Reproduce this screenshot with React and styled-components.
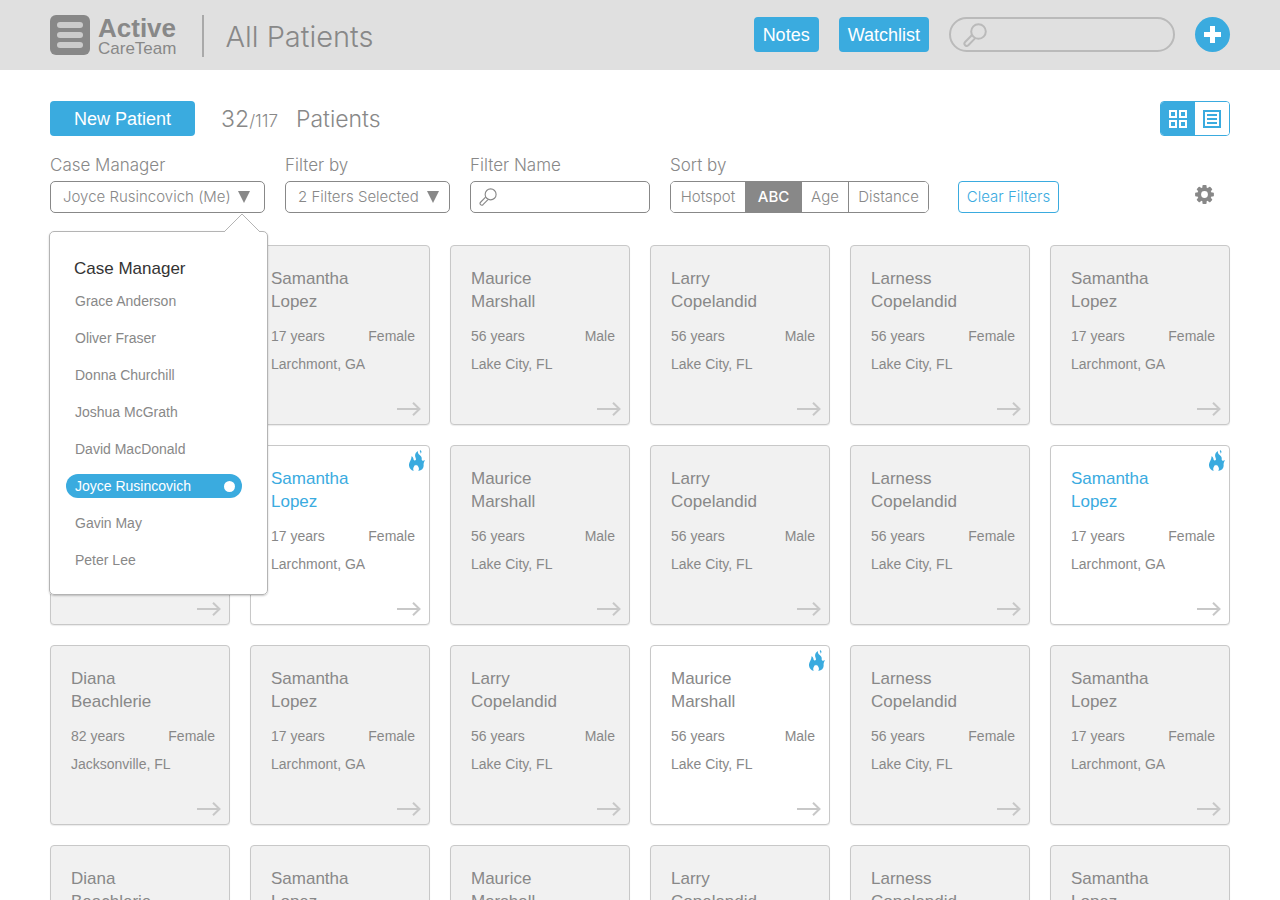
import React, { useState } from 'react';
import styled, { createGlobalStyle, css } from 'styled-components';

const blue = '#3aabdf';
const grey = '#888888';

const light = css`
  font-family: Inter, "Liberation Sans", sans-serif;
  font-weight: 300;
`;

const GlobalStyle = createGlobalStyle`
  *, *::before, *::after { box-sizing: border-box; }
  body {
    margin: 0;
    background: #fff;
    color: ${grey};
    font-family: "Liberation Sans", Arial, sans-serif;
    font-size: 15px;
  }
  button, input, select { font: inherit; color: inherit; }
  button { cursor: pointer; }
`;

const Header = styled.header`
  display: flex;
  align-items: center;
  height: 70px;
  padding: 0 50px;
  background: #e0e0e0;
`;

const MenuButton = styled.button`
  display: flex;
  flex-direction: column;
  align-items: center;
  justify-content: center;
  gap: 4px;
  width: 40px;
  height: 40px;
  padding: 0;
  border: 0;
  border-radius: 6px;
  background: ${grey};
`;

const MenuBar = styled.span`
  width: 26px;
  height: 6px;
  border-radius: 3px;
  background: #cbcbcb;
`;

const Brand = styled.a`
  display: flex;
  flex-direction: column;
  margin: 4px 0 2px 8px;
  padding-right: 26px;
  border-right: 2px solid #a9a9a9;
  color: ${grey};
  text-decoration: none;
  font-size: 17px;
  line-height: 16px;
`;

const BrandStrong = styled.strong`
  font-size: 26px;
  line-height: 26px;
`;

const PageTitle = styled.h1`
  ${light}
  margin: 0 auto 0 21px;
  padding-top: 3px;
  font-size: 29px;
  line-height: 40px;
`;

const HeaderActions = styled.div`
  display: flex;
  align-items: center;
  gap: 20px;
  padding-bottom: 1px;
`;

const PrimaryButton = styled.button`
  height: 35px;
  padding: 0 ${(p) => (p.$wide ? 24 : 9)}px;
  border: 0;
  border-radius: 4px;
  background: ${blue};
  color: #fff;
  font-size: 18px;
  line-height: 34px;
`;

const GlobalSearch = styled.label`
  display: flex;
  align-items: center;
  gap: 8px;
  width: 226px;
  height: 35px;
  padding: 0 14px 0 12px;
  border: 2px solid #bababa;
  border-radius: 18px;
  color: #bababa;
`;

const BareInput = styled.input`
  flex: 1;
  min-width: 0;
  padding: 0;
  border: 0;
  outline: 0;
  background: none;
  color: ${grey};
`;

const AddButton = styled.button`
  display: grid;
  place-items: center;
  width: 35px;
  height: 35px;
  padding: 0;
  border: 0;
  border-radius: 50%;
  background: ${blue};
`;

const Main = styled.main`
  padding: 31px 50px;
`;

const SummaryRow = styled.div`
  display: flex;
  align-items: center;
  height: 35px;
`;

const Count = styled.h2`
  ${light}
  margin: 0 auto 0 26px;
  font-size: 23px;
  white-space: pre;
`;

const Total = styled.span`
  margin-right: 18px;
  font-size: 17px;
`;

const ViewToggle = styled.div`
  display: flex;
  height: 35px;
  border: 1px solid ${blue};
  border-radius: 4px;
  overflow: hidden;
`;

const ViewButton = styled.button`
  display: grid;
  place-items: center;
  width: 34px;
  padding: 0;
  border: 0;
  background: ${(p) => (p.$active ? blue : '#fff')};
  color: ${(p) => (p.$active ? '#fff' : blue)};
`;

const FilterRow = styled.div`
  ${light}
  display: flex;
  align-items: flex-end;
  gap: 20px;
  margin-top: 18px;
`;

const Field = styled.div`
  position: relative;
  width: ${(p) => (p.$width ? p.$width + 'px' : 'auto')};
`;

const fieldLabel = css`
  display: block;
  height: 27px;
  font-size: 17px;
  line-height: 22px;
`;

const FieldLabel = styled.label`${fieldLabel}`;
const GroupLabel = styled.div`${fieldLabel}`;

const SelectShell = styled.div`
  display: grid;
  align-items: center;
`;

const Select = styled.select`
  grid-area: 1 / 1;
  width: 100%;
  height: 32px;
  padding: 0 30px 1px 12px;
  border: 1px solid ${grey};
  border-radius: 5px;
  background: #fff;
  appearance: none;
`;

const Caret = styled.svg`
  grid-area: 1 / 1;
  justify-self: end;
  margin-right: ${(p) => p.$inset}px;
  pointer-events: none;
`;

const NameBox = styled.div`
  display: flex;
  align-items: center;
  gap: 8px;
  height: 32px;
  padding: 0 8px;
  border: 1px solid ${grey};
  border-radius: 5px;
`;

const Segments = styled.div`
  display: flex;
  height: 32px;
  border: 1px solid ${grey};
  border-radius: 5px;
  overflow: hidden;
`;

const Segment = styled.button`
  width: ${(p) => p.$width}px;
  padding: 0 0 1px;
  border: 0;
  background: ${(p) => (p.$active ? grey : '#fff')};
  color: ${(p) => (p.$active ? '#fff' : grey)};
  font-weight: ${(p) => (p.$active ? 500 : 300)};

  & + & { border-left: 1px solid ${grey}; }
`;

const ClearButton = styled.button`
  height: 32px;
  width: 101px;
  margin-left: 9px;
  padding: 0 0 1px;
  border: 1px solid ${blue};
  border-radius: 4px;
  background: #fff;
  color: ${blue};
`;

const GearButton = styled.button`
  display: grid;
  place-items: center;
  height: 38px;
  margin-left: auto;
  padding: 0 16px;
  border: 0;
  background: none;
`;

const Popover = styled.fieldset`
  position: absolute;
  z-index: 2;
  top: 77px;
  left: -1px;
  width: 219px;
  margin: 0;
  padding: 27px 16px 22px;
  border: 1px solid #b4b4b4;
  border-radius: 5px;
  background: #fff;
  box-shadow: 0 1px 2px rgba(0, 0, 0, 0.22);
  font-family: "Liberation Sans", Arial, sans-serif;
  font-weight: 400;
`;

const PopoverTip = styled.svg`
  position: absolute;
  top: -19px;
  right: 7px;
`;

const PopoverTitle = styled.legend`
  float: left;
  width: 100%;
  padding: 0 8px;
  margin-bottom: 10px;
  color: #333;
  font-size: 17px;
  line-height: 20px;
`;

const OptionList = styled.div`
  clear: both;
  display: flex;
  flex-direction: column;
  gap: 13px;
`;

const Option = styled.label`
  display: flex;
  align-items: center;
  justify-content: space-between;
  width: 176px;
  height: 24px;
  padding: 0 7px 0 9px;
  border-radius: 12px;
  font-size: 14px;
  background: ${(p) => (p.$active ? blue : 'transparent')};
  color: ${(p) => (p.$active ? '#fff' : grey)};
  cursor: pointer;
`;

const OptionRadio = styled.input`
  width: 11px;
  height: 11px;
  margin: 0;
  border-radius: 50%;
  appearance: none;

  &:checked { background: #fff; }
`;

const Cards = styled.div`
  display: grid;
  grid-template-columns: repeat(6, minmax(0, 1fr));
  gap: 20px;
  margin-top: 32px;
`;

const Card = styled.article`
  position: relative;
  display: flex;
  flex-direction: column;
  height: 180px;
  padding: 21px 14px 8px 20px;
  border: 1px solid #c8c8c8;
  border-radius: 4px;
  background: ${(p) => (p.$hot ? '#fff' : '#f1f1f1')};
  box-shadow: 0 1px 1px rgba(0, 0, 0, 0.08);
`;

const PatientName = styled.h3`
  margin: 0;
  color: ${(p) => (p.$highlight ? blue : grey)};
  font-size: 17px;
  font-weight: 400;
  line-height: 23px;
`;

const Facts = styled.div`
  display: flex;
  justify-content: space-between;
  margin-top: 9px;
  font-size: 14px;
  line-height: 28px;
`;

const Place = styled.div`
  font-size: 14px;
  line-height: 28px;
`;

const OpenLink = styled.a`
  display: flex;
  margin: auto -7px 0 auto;
  color: #c8c8c8;
`;

const Flame = styled.svg`
  position: absolute;
  top: 4px;
  right: 4px;
`;

const SearchIcon = ({ size, stroke }) => (
  <svg width={size} height={size} viewBox="0 0 24 24" fill="none" stroke="currentColor" strokeWidth={stroke} aria-hidden="true">
    <circle cx="15.500" cy="8.500" r="7.300" />
    <path d="M8.800 12.200 2.100 19A2.300 2.300 0 0 0 5.300 22.300L12 15.400" strokeLinejoin="round" />
  </svg>
);

const DownCaret = ({ inset }) => (
  <Caret $inset={inset} width="12" height="12" viewBox="0 0 12 12" aria-hidden="true">
    <path d="M0 0H12L6 12Z" fill={grey} />
  </Caret>
);

const GearIcon = () => (
  <svg width="19" height="19" viewBox="-9.5 -9.5 19 19" aria-hidden="true">
    <g fill={grey}>
      {[0, 45, 90, 135].map((a) => (
        <rect key={a} x="-2.1" y="-9.4" width="4.2" height="18.8" rx="1" transform={`rotate(${a})`} />
      ))}
      <circle r="7.200" />
    </g>
    <circle r="3.400" fill="#fff" />
  </svg>
);

const FlameIcon = () => (
  <Flame width="16" height="21" viewBox="0 0 48 63" fill={blue} aria-hidden="true">
    <path d="M27 3C19 8 17 14 19 21C21 26 22 29 19 31C15 33 13 29 13 25C12 21 9 19 7 19C9 27 1 34 0 43C-1 52 5 60 14 63C11 57 13 50 19 44C20 47 22 48 23 44C29 49 32 56 28 63C38 61 44 55 44 47C43 41 45 36 48 30C43 34 38 33 38 28C39 21 36 18 32 15C27 11 26 7 27 3Z" />
    <path d="M33 0C31 5 35 6 35 11C39 7 38 2 33 0Z" />
  </Flame>
);

const ArrowIcon = () => (
  <svg width="25" height="14" viewBox="0 0 25 14" fill="none" stroke="currentColor" strokeWidth="2" aria-hidden="true">
    <path d="M0 7H22.500M16 0.800 22.500 7 16 13.200" />
  </svg>
);

const GridIcon = () => (
  <svg width="18" height="18" viewBox="0 0 18 18" fill="none" stroke="currentColor" strokeWidth="2" aria-hidden="true">
    <path d="M1 1H7V7H1ZM11 1H17V7H11ZM1 11H7V17H1ZM11 11H17V17H11Z" />
  </svg>
);

const ListIcon = () => (
  <svg width="18" height="18" viewBox="0 0 18 18" fill="none" stroke="currentColor" strokeWidth="2" aria-hidden="true">
    <path d="M1 1H17V17H1ZM4 5H14M4 9H14M4 13H14" />
  </svg>
);

const diana = ['Diana', 'Beachlerie', '82 years', 'Female', 'Jacksonville, FL'];
const samantha = ['Samantha', 'Lopez', '17 years', 'Female', 'Larchmont, GA'];
const maurice = ['Maurice', 'Marshall', '56 years', 'Male', 'Lake City, FL'];
const larry = ['Larry', 'Copelandid', '56 years', 'Male', 'Lake City, FL'];
const larness = ['Larness', 'Copelandid', '56 years', 'Female', 'Lake City, FL'];

const patients = [
  { who: diana }, { who: samantha }, { who: maurice }, { who: larry }, { who: larness }, { who: samantha },
  { who: diana }, { who: samantha, hot: true, highlight: true }, { who: maurice }, { who: larry }, { who: larness }, { who: samantha, hot: true, highlight: true },
  { who: diana }, { who: samantha }, { who: larry }, { who: maurice, hot: true }, { who: larness }, { who: samantha },
  { who: diana }, { who: samantha }, { who: maurice }, { who: larry }, { who: larness }, { who: samantha },
];

const managers = [
  'Grace Anderson', 'Oliver Fraser', 'Donna Churchill', 'Joshua McGrath',
  'David MacDonald', 'Joyce Rusincovich', 'Gavin May', 'Peter Lee',
];
const me = 'Joyce Rusincovich';
const sorts = [['Hotspot', 74], ['ABC', 56], ['Age', 47], ['Distance', 80]];

function PatientCard({ who, hot, highlight }) {
  const [first, last, age, sex, place] = who;
  return (
    <Card $hot={hot}>
      {hot && <FlameIcon />}
      <PatientName $highlight={highlight}>{first}<br />{last}</PatientName>
      <Facts><span>{age}</span><span>{sex}</span></Facts>
      <Place>{place}</Place>
      <OpenLink href="#patient" aria-label={`Open ${first} ${last}`}><ArrowIcon /></OpenLink>
    </Card>
  );
}

export default function App() {
  const [manager, setManager] = useState(me);
  const [open, setOpen] = useState(true);
  const [sort, setSort] = useState('ABC');
  const [view, setView] = useState('grid');
  const [name, setName] = useState('');

  return (
    <>
      <GlobalStyle />
      <Header>
        <MenuButton aria-label="Menu"><MenuBar /><MenuBar /><MenuBar /></MenuButton>
        <Brand href="#home"><BrandStrong>Active</BrandStrong>CareTeam</Brand>
        <PageTitle>All Patients</PageTitle>
        <HeaderActions>
          <PrimaryButton>Notes</PrimaryButton>
          <PrimaryButton>Watchlist</PrimaryButton>
          <GlobalSearch>
            <SearchIcon size={24} stroke={2} />
            <BareInput type="search" aria-label="Search" />
          </GlobalSearch>
          <AddButton aria-label="Add">
            <svg width="17" height="17" viewBox="0 0 17 17" aria-hidden="true">
              <path d="M8.500 0V17M0 8.500H17" stroke="#fff" strokeWidth="5" />
            </svg>
          </AddButton>
        </HeaderActions>
      </Header>
      <Main>
        <SummaryRow>
          <PrimaryButton $wide>New Patient</PrimaryButton>
          <Count>32<Total>/117</Total>Patients</Count>
          <ViewToggle>
            <ViewButton aria-label="Grid view" $active={view === 'grid'} onClick={() => setView('grid')}><GridIcon /></ViewButton>
            <ViewButton aria-label="List view" $active={view === 'list'} onClick={() => setView('list')}><ListIcon /></ViewButton>
          </ViewToggle>
        </SummaryRow>
        <FilterRow>
          <Field $width={215}>
            <FieldLabel htmlFor="manager">Case Manager</FieldLabel>
            <SelectShell>
              <Select
                id="manager"
                value={manager}
                onChange={(e) => setManager(e.target.value)}
                onMouseDown={(e) => { e.preventDefault(); setOpen(!open); }}
              >
                {managers.map((m) => <option key={m} value={m}>{m === me ? `${m} (Me)` : m}</option>)}
              </Select>
              <DownCaret inset={15} />
            </SelectShell>
            {open && (
              <Popover>
                <PopoverTip width="36" height="20" viewBox="0 0 36 20" aria-hidden="true">
                  <path d="M0 20V19L18 1L36 19V20Z" fill="#fff" />
                  <path d="M0 19L18 1L36 19" fill="none" stroke="#b4b4b4" />
                </PopoverTip>
                <PopoverTitle>Case Manager</PopoverTitle>
                <OptionList>
                  {managers.map((m) => (
                    <Option key={m} $active={m === manager}>
                      {m}
                      <OptionRadio type="radio" name="manager-option" checked={m === manager} onChange={() => setManager(m)} />
                    </Option>
                  ))}
                </OptionList>
              </Popover>
            )}
          </Field>
          <Field $width={165}>
            <FieldLabel htmlFor="filter">Filter by</FieldLabel>
            <SelectShell>
              <Select id="filter"><option>2 Filters Selected</option></Select>
              <DownCaret inset={11} />
            </SelectShell>
          </Field>
          <Field $width={180}>
            <FieldLabel htmlFor="name">Filter Name</FieldLabel>
            <NameBox>
              <SearchIcon size={18} stroke={1.5} />
              <BareInput id="name" value={name} onChange={(e) => setName(e.target.value)} />
            </NameBox>
          </Field>
          <Field>
            <GroupLabel id="sort">Sort by</GroupLabel>
            <Segments role="group" aria-labelledby="sort">
              {sorts.map(([s, w]) => (
                <Segment key={s} $width={w} $active={sort === s} onClick={() => setSort(s)}>{s}</Segment>
              ))}
            </Segments>
          </Field>
          <ClearButton onClick={() => setName('')}>Clear Filters</ClearButton>
          <GearButton aria-label="Settings"><GearIcon /></GearButton>
        </FilterRow>
        <Cards>
          {patients.map((p, i) => <PatientCard key={i} {...p} />)}
        </Cards>
      </Main>
    </>
  );
}
